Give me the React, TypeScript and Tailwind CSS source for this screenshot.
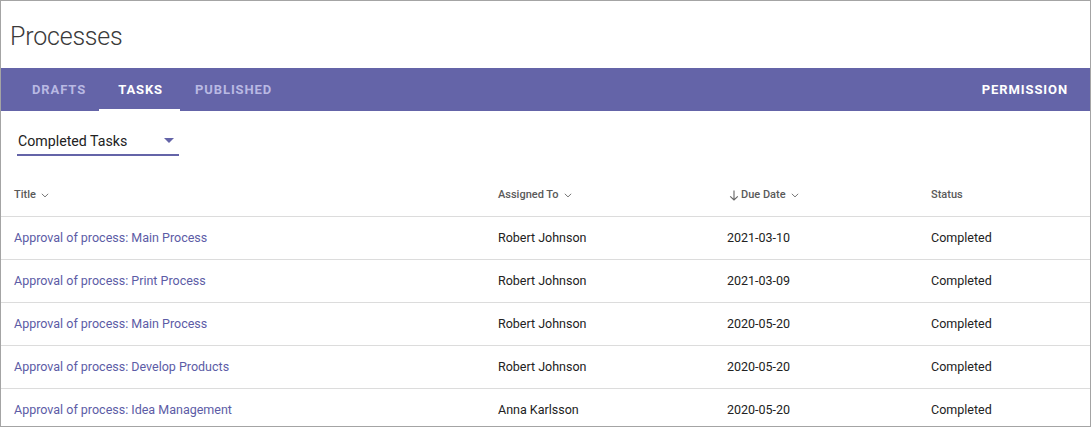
import React from "react";

const rows = [
  ["Approval of process: Main Process", "Robert Johnson", "2021-03-10", "Completed"],
  ["Approval of process: Print Process", "Robert Johnson", "2021-03-09", "Completed"],
  ["Approval of process: Main Process", "Robert Johnson", "2020-05-20", "Completed"],
  ["Approval of process: Develop Products", "Robert Johnson", "2020-05-20", "Completed"],
  ["Approval of process: Idea Management", "Anna Karlsson", "2020-05-20", "Completed"],
];

function Chevron() {
  return (
    <svg width="8" height="5" viewBox="0 0 8 5" className="ml-[5px] mt-[1px]">
      <path d="M0.8 0.8 L4 3.9 L7.2 0.8" fill="none" stroke="#777" strokeWidth="1" />
    </svg>
  );
}

export default function App() {
  return (
    <div
      className="w-[1091px] h-[427px] border border-[#a4a4a4] bg-white overflow-hidden box-border"
      style={{ fontFamily: "Roboto, 'Noto Sans', sans-serif" }}
    >
      <div className="h-[67px] flex items-center pl-[9px] pt-[4px]">
        <h1 className="text-[25px] font-light text-[#3a3a3a] leading-none tracking-[-0.2px]">Processes</h1>
      </div>
      <div className="h-[43px] bg-[#6464a8] flex items-stretch pl-[12px] pr-[22px]">
        <div className="pl-[19px] pr-[13px] flex items-center text-[13px] font-bold tracking-[0.9px] text-[#b9b9e3]">DRAFTS</div>
        <div className="pl-[19px] pr-[17px] flex items-center text-[13px] font-bold tracking-[0.9px] text-white border-b-2 border-white pt-[2px]">TASKS</div>
        <div className="pl-[15px] flex items-center text-[13px] font-bold tracking-[0.9px] text-[#b9b9e3]">PUBLISHED</div>
        <div className="ml-auto flex items-center text-[13px] font-bold tracking-[0.9px] text-white">PERMISSION</div>
      </div>
      <div className="h-[63px] pl-[16px] pt-[19px]">
        <div className="w-[162px] h-[26px] border-b-2 border-[#6464a8] flex items-center justify-between pl-[1px] pr-[5px] pb-[1px]">
          <span className="text-[14.2px] text-[#222]">Completed Tasks</span>
          <svg width="10" height="5" viewBox="0 0 10 5" className="mb-[2px]">
            <path d="M0 0 L10 0 L5 5 Z" fill="#6464a8" />
          </svg>
        </div>
      </div>
      <div className="grid grid-cols-[484px_229px_204px_1fr] pl-[13px] h-[43px] items-center border-b border-[#dcdcdc] text-[11px] font-medium text-[#5a5a5a]">
        <div className="flex items-center">Title<Chevron /></div>
        <div className="flex items-center">Assigned To<Chevron /></div>
        <div className="flex items-center pl-[2px]">
          <svg width="10" height="11" viewBox="0 0 10 11" className="mr-[2px]">
            <path d="M5 0.5 V10 M1.2 6.3 L5 10 L8.8 6.3" fill="none" stroke="#666" strokeWidth="1.1" />
          </svg>
          Due Date<Chevron />
        </div>
        <div>Status</div>
      </div>
      {rows.map((r, i) => (
        <div
          key={i}
          className="grid grid-cols-[484px_229px_204px_1fr] pl-[13px] h-[43px] items-center border-b border-[#dcdcdc] text-[12.5px] text-[#222]"
        >
          <div className="text-[#5c5ca6]">{r[0]}</div>
          <div>{r[1]}</div>
          <div>{r[2]}</div>
          <div>{r[3]}</div>
        </div>
      ))}
    </div>
  );
}
